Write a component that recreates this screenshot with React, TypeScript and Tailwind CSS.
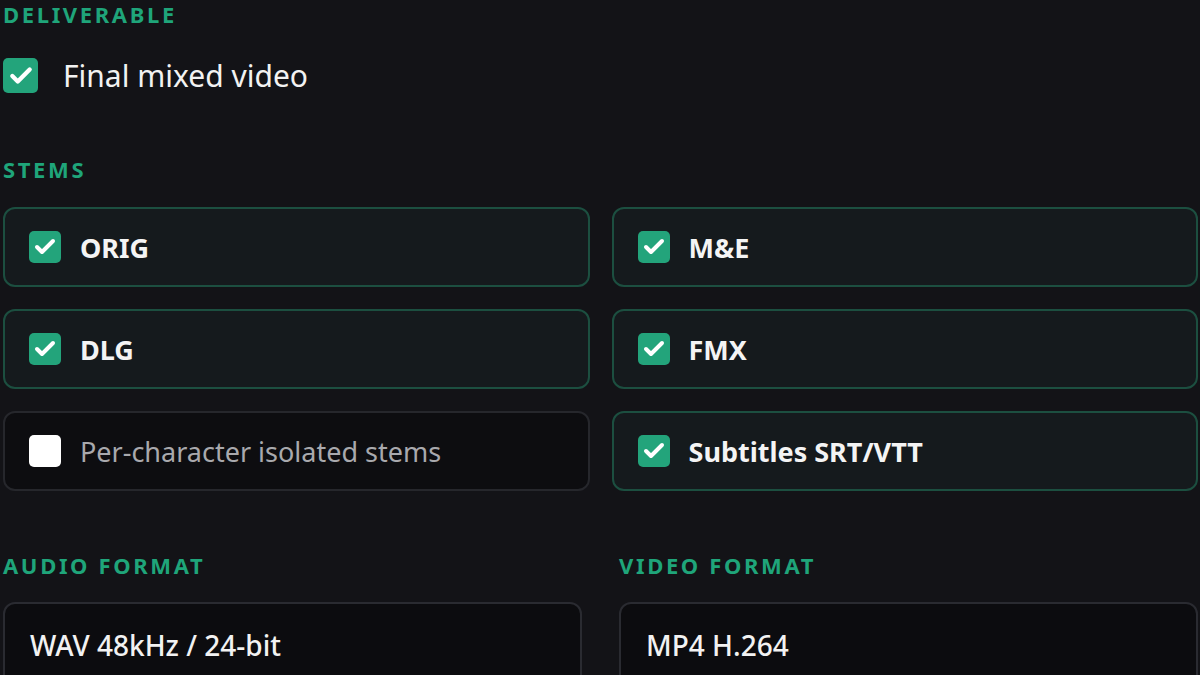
import { Check } from 'lucide-react'

type Stem = { label: string; checked: boolean }

const stems: Stem[] = [
  { label: 'ORIG', checked: true },
  { label: 'M&E', checked: true },
  { label: 'DLG', checked: true },
  { label: 'FMX', checked: true },
  { label: 'Per-character isolated stems', checked: false },
  { label: 'Subtitles SRT/VTT', checked: true },
]

function Box({ checked, size = 'sm' }: { checked: boolean; size?: 'sm' | 'lg' }) {
  const dim = size === 'lg' ? 'h-[35px] w-[35px]' : 'h-[32px] w-[32px]'
  if (!checked) return <div className={`${dim} shrink-0 rounded-[5px] bg-white`} />
  return (
    <div className={`${dim} flex shrink-0 items-center justify-center rounded-[5px] bg-[#23a47b]`}>
      <Check size={size === 'lg' ? 26 : 24} strokeWidth={4} color="#ffffff" />
    </div>
  )
}

function Label({ children }: { children: string }) {
  return <p className="text-[22px] font-bold tracking-[0.12em] text-[#1fa57a] leading-none">{children}</p>
}

export default function App() {
  return (
    <div className="h-[675px] w-[1200px] overflow-hidden bg-[#131317] pl-[3px] pr-[2px] pt-[3px] font-['Noto_Sans',sans-serif] text-white">
      <Label>DELIVERABLE</Label>
      <div className="mt-[33px] flex items-center gap-x-[25px]">
        <Box checked size="lg" />
        <p className="text-[30px] leading-none text-[#f2f2f2]">Final mixed video</p>
      </div>

      <div className="mt-[65px]">
        <Label>STEMS</Label>
      </div>
      <div className="mt-[27px] grid grid-cols-2 gap-x-[22px] gap-y-[22px]">
        {stems.map((s) => (
          <div
            key={s.label}
            className={`flex h-[80px] items-center gap-x-[19px] rounded-[12px] border-2 px-[24px] ${
              s.checked ? 'border-[#1c4f40] bg-[#151a1d]' : 'border-[#26272c] bg-[#0d0d10]'
            }`}
          >
            <Box checked={s.checked} />
            <p
              className={`text-[27px] leading-none ${
                s.checked ? 'font-bold text-[#f4f4f4]' : 'font-normal text-[#a9a9ad]'
              }`}
            >
              {s.label}
            </p>
          </div>
        ))}
      </div>

      <div className="mt-[63px] grid grid-cols-2 gap-x-[37px]">
        {['AUDIO FORMAT', 'VIDEO FORMAT'].map((t, i) => (
          <div key={t}>
            <Label>{t}</Label>
            <div className="mt-[26px] flex h-[90px] items-start rounded-[12px] border-2 border-[#2a2b31] bg-[#0c0c0f] px-[25px] pt-[27px]">
              <p className="text-[28px] font-medium leading-none text-[#f2f2f2]">
                {i === 0 ? 'WAV 48kHz / 24-bit' : 'MP4 H.264'}
              </p>
            </div>
          </div>
        ))}
      </div>
    </div>
  )
}
